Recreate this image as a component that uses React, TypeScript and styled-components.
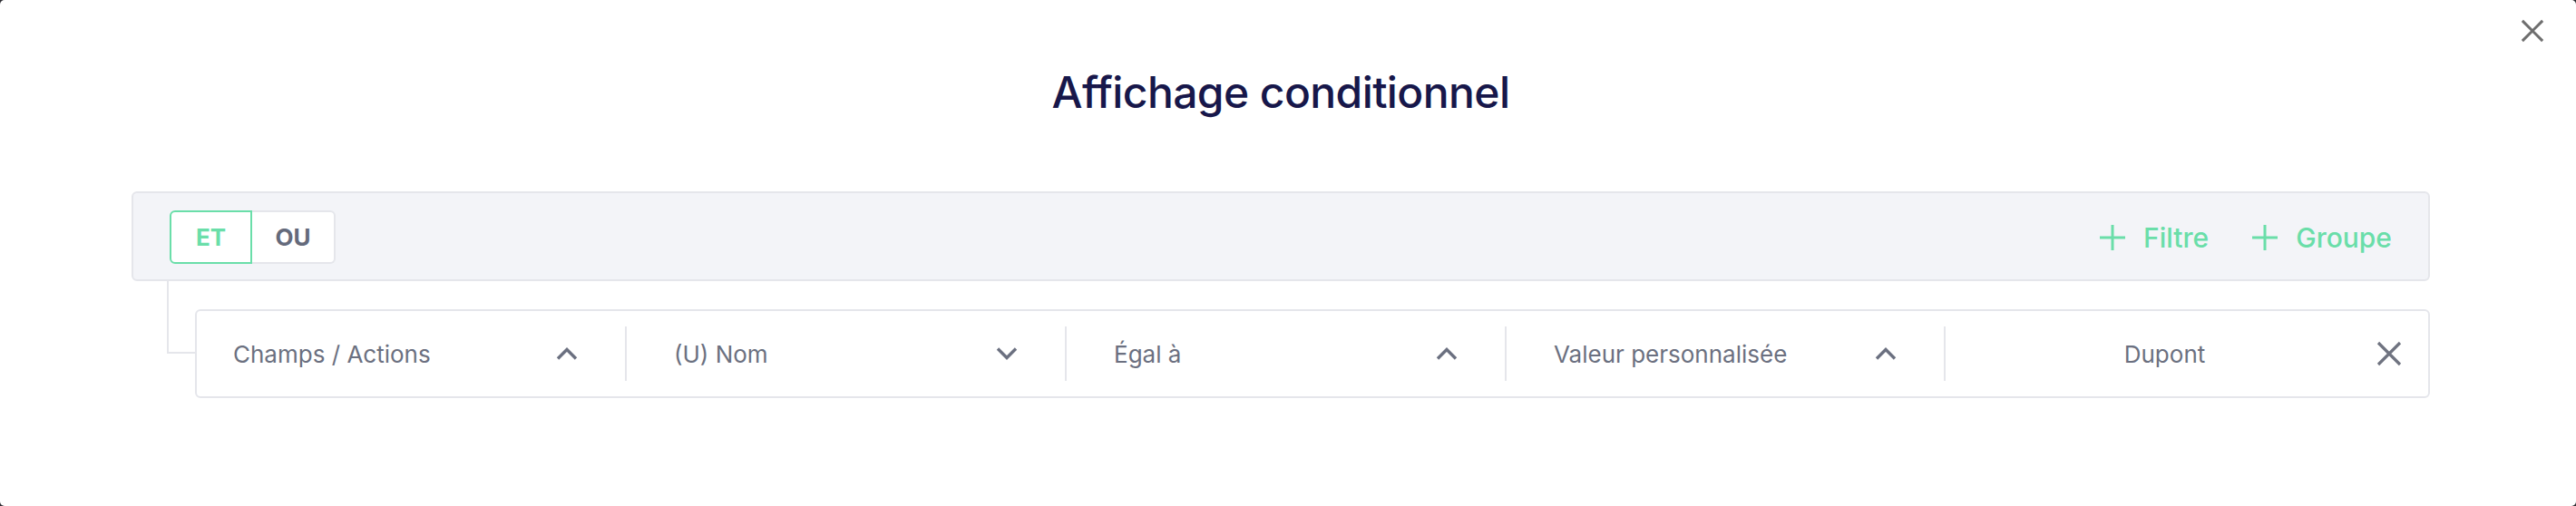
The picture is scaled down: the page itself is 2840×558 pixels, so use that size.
import React, { useState } from "react";
import styled, { createGlobalStyle } from "styled-components";

const GREEN = "#6adea9";
const GRAY = "#6b7080";
const LINE = "#e5e6eb";

const GlobalStyle = createGlobalStyle`
  html, body {
    margin: 0;
    padding: 0;
    background: #2e2e33;
    font-family: Inter, "Noto Sans", sans-serif;
  }
`;

type Op = "ET" | "OU";

const conditions = [
  { label: "Champs / Actions", open: true, width: 474, first: true },
  { label: "(U) Nom", open: false, width: 485 },
  { label: "Égal à", open: true, width: 485 },
  { label: "Valeur personnalisée", open: true, width: 484 },
];

const Chevron = ({ up }: { up: boolean }) => (
  <svg width="24" height="14" viewBox="0 0 24 14" fill="none">
    <polyline
      points={up ? "2,12.5 12,2.5 22,12.5" : "2,1.5 12,11.5 22,1.5"}
      stroke={GRAY}
      strokeWidth="3.4"
    />
  </svg>
);

const Cross = ({ size, color }: { size: number; color: string }) => (
  <svg width={size} height={size} viewBox="0 0 28 28" fill="none">
    <path d="M2 2 L26 26 M26 2 L2 26" stroke={color} strokeWidth="3.2" />
  </svg>
);

const Plus = () => (
  <svg width="28" height="28" viewBox="0 0 28 28" fill="none">
    <path d="M14 0 V28 M0 14 H28" stroke={GREEN} strokeWidth="3" />
  </svg>
);

const App: React.FC = () => {
  const [op, setOp] = useState<Op>("ET");

  return (
    <>
      <GlobalStyle />
      <Modal>
        <CloseButton aria-label="Fermer">
          <Cross size={26} color="#6e6e6e" />
        </CloseButton>
        <Title>Affichage conditionnel</Title>
        <Group>
          <GroupHeader>
            <Toggle>
              <ToggleButton $active={op === "ET"} $side="left" onClick={() => setOp("ET")}>
                ET
              </ToggleButton>
              <ToggleButton $active={op === "OU"} $side="right" onClick={() => setOp("OU")}>
                OU
              </ToggleButton>
            </Toggle>
            <Actions>
              <AddButton>
                <Plus />
                Filtre
              </AddButton>
              <AddButton>
                <Plus />
                Groupe
              </AddButton>
            </Actions>
          </GroupHeader>
          <GroupBody>
            <Connector />
            <ConditionRow>
              {conditions.map((c) => (
                <SelectCell key={c.label} $first={!!c.first} style={{ width: c.width }}>
                  <span>{c.label}</span>
                  <Chevron up={c.open} />
                </SelectCell>
              ))}
              <ValueCell>
                <ValueInput defaultValue="Dupont" />
                <RemoveButton aria-label="Supprimer">
                  <Cross size={28} color="#6f7380" />
                </RemoveButton>
              </ValueCell>
            </ConditionRow>
          </GroupBody>
        </Group>
      </Modal>
    </>
  );
};

const Modal = styled.div`
  position: relative;
  box-sizing: border-box;
  height: 100vh;
  background: #fff;
  border-radius: 5px;
  padding: 72px 161px 0 145px;
`;

const CloseButton = styled.button`
  position: absolute;
  top: 21px;
  right: 35px;
  padding: 0;
  border: none;
  background: none;
  display: flex;
  cursor: pointer;
`;

const Title = styled.h1`
  margin: 0;
  text-align: center;
  font-size: 48px;
  line-height: 60px;
  letter-spacing: -0.6px;
  font-weight: 500;
  color: #17174a;
`;

const Group = styled.div`
  margin-top: 79px;
`;

const GroupHeader = styled.div`
  display: flex;
  align-items: center;
  justify-content: space-between;
  padding: 19px 40px 17px;
  background: #f3f4f8;
  border: 2px solid ${LINE};
  border-radius: 6px;
`;

const Toggle = styled.div`
  display: flex;
`;

const ToggleButton = styled.button<{ $active: boolean; $side: "left" | "right" }>`
  width: ${(p) => (p.$side === "left" ? 91 : 92)}px;
  height: 59px;
  box-sizing: border-box;
  background: #fff;
  font-family: Inter, sans-serif;
  font-size: 26px;
  font-weight: 700;
  color: ${(p) => (p.$active ? GREEN : "#646a7b")};
  border: 2px solid ${(p) => (p.$active ? GREEN : LINE)};
  border-radius: ${(p) => (p.$side === "left" ? "6px 0 0 6px" : "0 6px 6px 0")};
  ${(p) => (p.$side === "right" ? "border-left: none;" : "")}
  cursor: pointer;
`;

const Actions = styled.div`
  display: flex;
  align-items: center;
  gap: 48px;
`;

const AddButton = styled.button`
  display: flex;
  align-items: center;
  gap: 20px;
  padding: 0;
  border: none;
  background: none;
  font-family: Inter, sans-serif;
  font-size: 30px;
  font-weight: 500;
  color: ${GREEN};
  cursor: pointer;
`;

const GroupBody = styled.div`
  display: flex;
  align-items: flex-start;
`;

const Connector = styled.div`
  flex: 0 0 31px;
  height: 80px;
  margin-left: 39px;
  box-sizing: border-box;
  border-left: 2px solid ${LINE};
  border-bottom: 2px solid ${LINE};
`;

const ConditionRow = styled.div`
  flex: 1;
  display: flex;
  align-items: center;
  height: 98px;
  box-sizing: border-box;
  margin-top: 31px;
  background: #fff;
  border: 2px solid ${LINE};
  border-radius: 6px;
`;

const SelectCell = styled.div<{ $first: boolean }>`
  display: flex;
  align-items: center;
  justify-content: space-between;
  box-sizing: border-box;
  height: 60px;
  padding: 0 52px 0 ${(p) => (p.$first ? 40 : 52)}px;
  border-right: 2px solid ${LINE};
  font-size: 26px;
  color: ${GRAY};
  cursor: pointer;
`;

const ValueCell = styled.div`
  flex: 1;
  display: flex;
  align-items: center;
  padding-right: 29px;
`;

const ValueInput = styled.input`
  flex: 1;
  min-width: 0;
  padding: 0 0 0 8px;
  border: none;
  outline: none;
  background: transparent;
  text-align: center;
  font-family: Inter, sans-serif;
  font-size: 26px;
  color: ${GRAY};
`;

const RemoveButton = styled.button`
  display: flex;
  padding: 0;
  border: none;
  background: none;
  cursor: pointer;
`;

export default App;
